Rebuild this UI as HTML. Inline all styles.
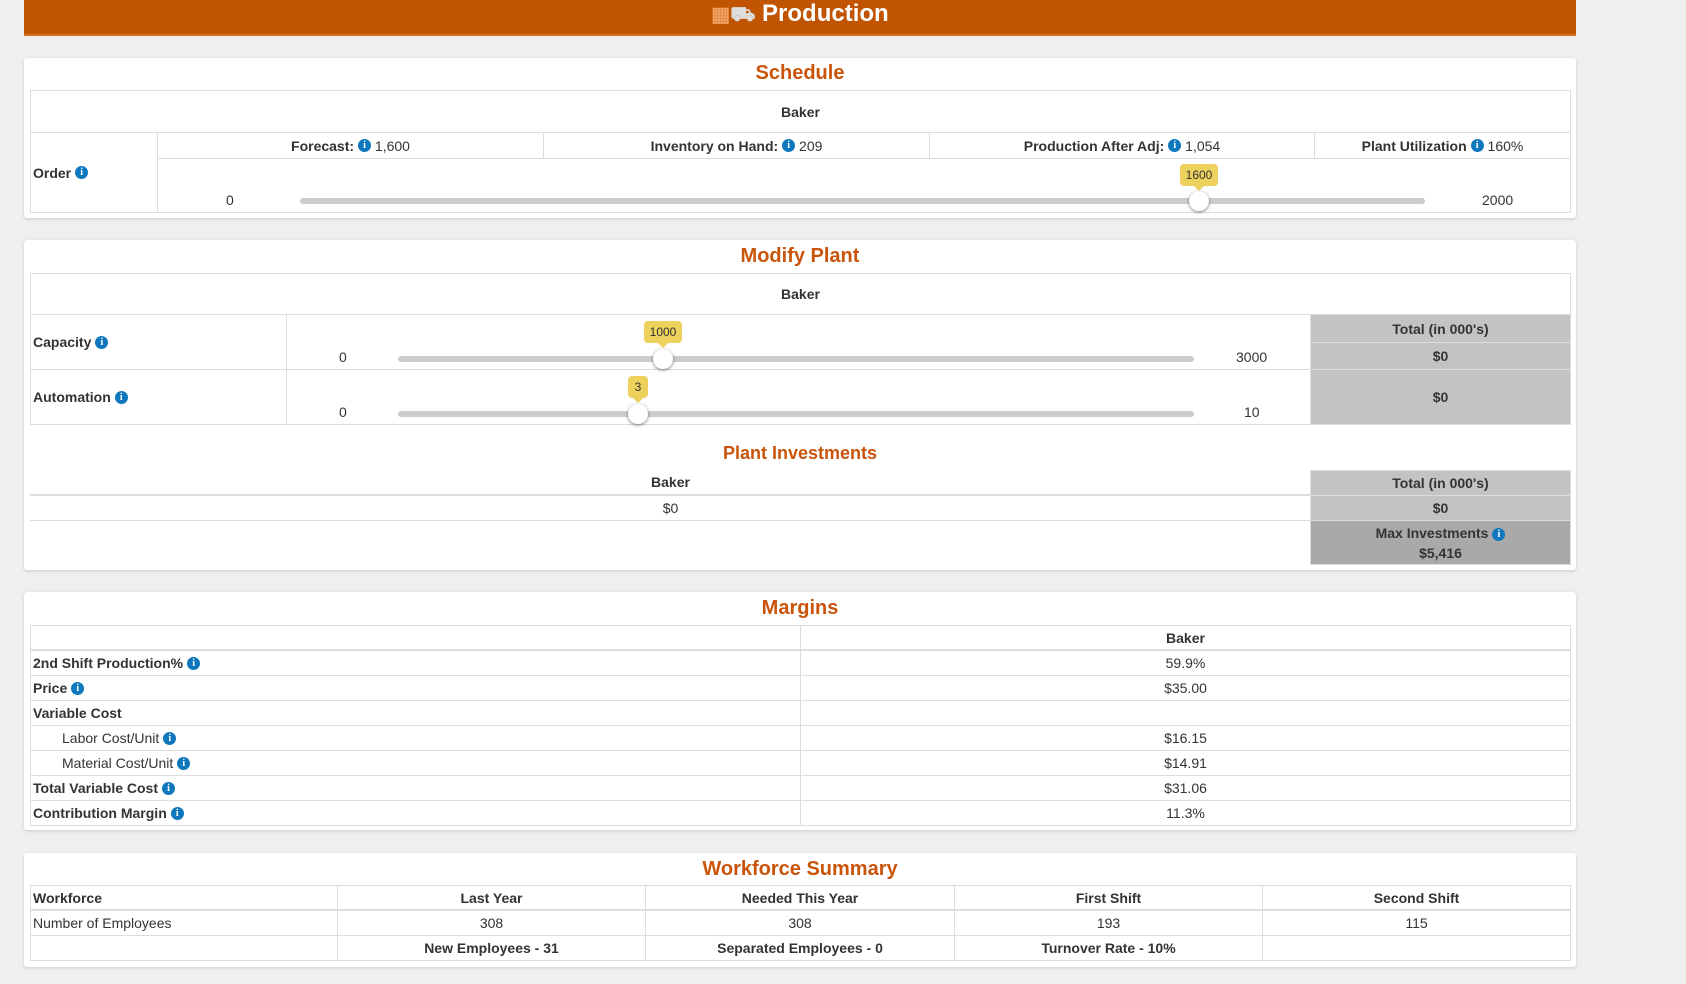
<!DOCTYPE html>
<html><head><meta charset="utf-8"><style>
*{box-sizing:border-box;margin:0;padding:0}
body{width:1686px;height:984px;background:#efefef;font-family:"Liberation Sans",Arial,sans-serif;font-size:14px;color:#333;position:relative;overflow:hidden}
.a{position:absolute}
.hdr{left:24px;top:0;width:1552px;height:36px;background:#c15400;border-bottom:2px solid #d8701e;color:#fff;font-size:24px;font-weight:bold;text-align:center;line-height:28px}
.p{background:#fff;border-radius:3px;box-shadow:0 1px 3px rgba(0,0,0,.15);left:24px;width:1552px}
.t{color:#c9540a;font-size:20px;font-weight:bold;text-align:center;width:100%}
.c{position:absolute;border:1px solid #ddd;display:flex;align-items:center;justify-content:center;white-space:nowrap}
.l{justify-content:flex-start;padding-left:2px}
b{font-weight:bold}
.i{display:inline-block;width:13px;height:13px;border-radius:50%;background:#0f78bd;color:#fff;font-size:10px;font-weight:bold;text-align:center;line-height:13px;vertical-align:1px;margin-left:4px;font-family:"Liberation Serif",serif}
.g{background:#c3c3c3;border-color:#ddd;font-weight:bold}
.track{position:absolute;height:6px;background:#ccc;border-radius:3px}
.h{position:absolute;width:20px;height:20px;border-radius:50%;background:#fff;box-shadow:0 1px 3px rgba(0,0,0,.5)}
.tip{position:absolute;background:#ecd15d;border-radius:4px;font-size:12px;height:22px;line-height:22px;text-align:center;color:#333}
.tip:after{content:"";position:absolute;left:50%;bottom:-5px;margin-left:-5px;border:5px solid transparent;border-bottom:0;border-top-color:#ecd15d}
</style></head><body>
<div class="a hdr"><span style="font-size:20px;color:#f0a060">▦</span><span style="color:#ddd;font-size:20px">⛟</span> Production</div>

<!-- Schedule -->
<div class="a p" style="top:58px;height:160px">
<div class="a t" style="top:4px">Schedule</div>
</div>
<div class="c" style="left:30px;top:90px;width:1541px;height:43px"><b>Baker</b></div>
<div class="c l" style="left:30px;top:132px;width:128px;height:81px"><b>Order</b><span class="i">i</span></div>
<div class="c" style="left:157px;top:132px;width:387px;height:27px"><b>Forecast:</b><span class="i">i</span>&nbsp;1,600</div>
<div class="c" style="left:543px;top:132px;width:387px;height:27px"><b>Inventory on Hand:</b><span class="i">i</span>&nbsp;209</div>
<div class="c" style="left:929px;top:132px;width:386px;height:27px"><b>Production After Adj:</b><span class="i">i</span>&nbsp;1,054</div>
<div class="c" style="left:1314px;top:132px;width:257px;height:27px"><b>Plant Utilization</b><span class="i">i</span>&nbsp;160%</div>
<div class="c" style="left:157px;top:158px;width:1414px;height:55px"></div>
<div class="a" style="left:226px;top:192px">0</div>
<div class="a" style="left:1482px;top:192px">2000</div>
<div class="track" style="left:300px;top:198px;width:1125px"></div>
<div class="h" style="left:1189px;top:191px"></div>
<div class="tip" style="left:1180px;top:164px;width:38px">1600</div>

<!-- Modify Plant -->
<div class="a p" style="top:240px;height:330px">
<div class="a t" style="top:5px">Modify Plant</div>
<div class="a t" style="top:203px;font-size:18px">Plant Investments</div>
</div>
<div class="c" style="left:30px;top:273px;width:1541px;height:42px"><b>Baker</b></div>
<div class="c l" style="left:30px;top:314px;width:257px;height:56px"><b>Capacity</b><span class="i">i</span></div>
<div class="c l" style="left:30px;top:369px;width:257px;height:56px"><b>Automation</b><span class="i">i</span></div>
<div class="c" style="left:286px;top:314px;width:1025px;height:56px"></div>
<div class="c" style="left:286px;top:369px;width:1025px;height:56px"></div>
<div class="c g" style="left:1310px;top:314px;width:261px;height:29px">Total (in 000's)</div>
<div class="c g" style="left:1310px;top:342px;width:261px;height:28px">$0</div>
<div class="c g" style="left:1310px;top:369px;width:261px;height:56px">$0</div>
<div class="a" style="left:339px;top:349px">0</div>
<div class="a" style="left:1236px;top:349px">3000</div>
<div class="track" style="left:398px;top:356px;width:796px"></div>
<div class="h" style="left:653px;top:349px"></div>
<div class="tip" style="left:644px;top:321px;width:38px">1000</div>
<div class="a" style="left:339px;top:404px">0</div>
<div class="a" style="left:1244px;top:404px">10</div>
<div class="track" style="left:398px;top:411px;width:796px"></div>
<div class="h" style="left:628px;top:404px"></div>
<div class="tip" style="left:628px;top:376px;width:20px">3</div>

<div class="c" style="left:30px;top:470px;width:1281px;height:26px;border-width:0 0 2px 0"><b>Baker</b></div>
<div class="c" style="left:30px;top:495px;width:1281px;height:26px;border-width:0 0 1px 0">$0</div>
<div class="c g" style="left:1310px;top:470px;width:261px;height:26px">Total (in 000's)</div>
<div class="c g" style="left:1310px;top:495px;width:261px;height:26px">$0</div>
<div class="c g" style="left:1310px;top:520px;width:261px;height:45px;background:#a9a9a9;flex-direction:column;line-height:20px">
<div>Max Investments<span class="i">i</span></div><div>$5,416</div></div>

<!-- Margins -->
<div class="a p" style="top:592px;height:238px">
<div class="a t" style="top:5px">Margins</div>
</div>
<div class="c" style="left:30px;top:625px;width:771px;height:26px;border-bottom-width:2px"></div>
<div class="c" style="left:800px;top:625px;width:771px;height:26px;border-bottom-width:2px"><b>Baker</b></div>
<div class="c l" style="left:30px;top:650px;width:771px;height:26px"><b>2nd Shift Production%</b><span class="i">i</span></div>
<div class="c" style="left:800px;top:650px;width:771px;height:26px">59.9%</div>
<div class="c l" style="left:30px;top:675px;width:771px;height:26px"><b>Price</b><span class="i">i</span></div>
<div class="c" style="left:800px;top:675px;width:771px;height:26px">$35.00</div>
<div class="c l" style="left:30px;top:700px;width:771px;height:26px"><b>Variable Cost</b></div>
<div class="c" style="left:800px;top:700px;width:771px;height:26px"></div>
<div class="c l" style="left:30px;top:725px;width:771px;height:26px;padding-left:31px">Labor Cost/Unit<span class="i">i</span></div>
<div class="c" style="left:800px;top:725px;width:771px;height:26px">$16.15</div>
<div class="c l" style="left:30px;top:750px;width:771px;height:26px;padding-left:31px">Material Cost/Unit<span class="i">i</span></div>
<div class="c" style="left:800px;top:750px;width:771px;height:26px">$14.91</div>
<div class="c l" style="left:30px;top:775px;width:771px;height:26px"><b>Total Variable Cost</b><span class="i">i</span></div>
<div class="c" style="left:800px;top:775px;width:771px;height:26px">$31.06</div>
<div class="c l" style="left:30px;top:800px;width:771px;height:26px"><b>Contribution Margin</b><span class="i">i</span></div>
<div class="c" style="left:800px;top:800px;width:771px;height:26px">11.3%</div>

<!-- Workforce -->
<div class="a p" style="top:853px;height:114px">
<div class="a t" style="top:5px">Workforce Summary</div>
</div>
<div class="c l" style="left:30px;top:885px;width:308px;height:26px;border-bottom-width:2px"><b>Workforce</b></div>
<div class="c" style="left:337px;top:885px;width:309px;height:26px;border-bottom-width:2px"><b>Last Year</b></div>
<div class="c" style="left:645px;top:885px;width:310px;height:26px;border-bottom-width:2px"><b>Needed This Year</b></div>
<div class="c" style="left:954px;top:885px;width:309px;height:26px;border-bottom-width:2px"><b>First Shift</b></div>
<div class="c" style="left:1262px;top:885px;width:309px;height:26px;border-bottom-width:2px"><b>Second Shift</b></div>
<div class="c l" style="left:30px;top:910px;width:308px;height:26px">Number of Employees</div>
<div class="c" style="left:337px;top:910px;width:309px;height:26px">308</div>
<div class="c" style="left:645px;top:910px;width:310px;height:26px">308</div>
<div class="c" style="left:954px;top:910px;width:309px;height:26px">193</div>
<div class="c" style="left:1262px;top:910px;width:309px;height:26px">115</div>
<div class="c" style="left:30px;top:935px;width:308px;height:26px"></div>
<div class="c" style="left:337px;top:935px;width:309px;height:26px"><b>New Employees - 31</b></div>
<div class="c" style="left:645px;top:935px;width:310px;height:26px"><b>Separated Employees - 0</b></div>
<div class="c" style="left:954px;top:935px;width:309px;height:26px"><b>Turnover Rate - 10%</b></div>
<div class="c" style="left:1262px;top:935px;width:309px;height:26px"></div>
</body></html>
